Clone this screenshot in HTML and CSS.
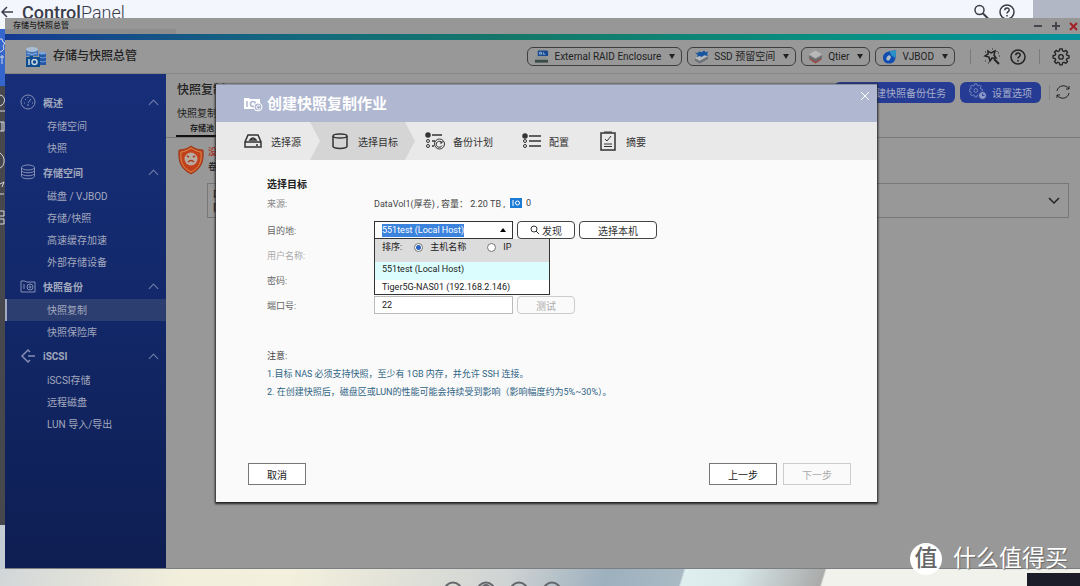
FILE: index.html
```html
<!DOCTYPE html>
<html lang="zh-CN">
<head>
<meta charset="utf-8">
<title>存储与快照总管</title>
<link rel="stylesheet" href="styles.css">
</head>
<body>
<div class="desktop">
  <header class="panel">
    <div class="panel-main">
      <svg class="back" viewBox="0 0 14 14"><path d="M13 7H2M7 2 2 7l5 5"/></svg>
      <span class="panel-title"><b>Control</b>Panel</span>
      <svg class="panel-icon" viewBox="0 0 18 18"><circle cx="7.500" cy="7" r="4.500"/><path d="m11 10.500 5 5" stroke-width="2"/></svg>
      <svg class="panel-icon" viewBox="0 0 18 18"><circle cx="9" cy="9" r="7"/><path d="M6.800 7.300C6.800 4.300 11.300 4.400 11.200 7c0 1.700-2.200 1.600-2.200 3.500M9 12v1.400"/></svg>
    </div>
  </header>
  <div class="rail">
    <div class="rail-on"><svg viewBox="0 0 5 40"><path d="M0 10h2l1 3 2 1-2 3 1 3-2 2-2 1M0 28h4M2 26v9"/></svg></div>
    <svg class="rail-rest" viewBox="0 0 5 150"><path d="M0 9c6 1 6 9 0 11M0 25h5M0 36h4v9H0M2 36v9M0 67c6 4 5 13 0 15M0 98l4-2-2 5M0 108h4M0 125h4v5H0M0 133h4v5H0"/></svg>
  </div>
  <footer class="dock">
    <svg viewBox="0 0 20 20"><circle cx="10" cy="10" r="8.500"/></svg>
    <svg viewBox="0 0 20 20"><circle cx="10" cy="10" r="8.500"/><circle cx="10" cy="8" r="4"/></svg>
    <svg viewBox="0 0 20 20"><circle cx="10" cy="10" r="8.500"/></svg>
    <svg viewBox="0 0 20 20"><circle cx="10" cy="10" r="8.500"/></svg>
  </footer>

  <main class="window">
    <div class="titlebar">
      <span class="titlebar-name">存储与快照总管</span>
      <svg class="win-controls" viewBox="0 0 46 12"><path d="M2 6h8M20 6h8M24 2v8" stroke="#44464b"/><path d="m38 3 7 7m0-7-7 7" stroke="#a52026"/></svg>
    </div>
    <div class="stripe"></div>
    <div class="appbar">
      <svg class="app-logo" viewBox="0 0 22 22"><path d="M1 3v7h12V3z" fill="#3f73bd"/><ellipse cx="7" cy="3.500" rx="6" ry="2.500" fill="#a9bdd5"/><path d="M2 7q5 3 10 0" stroke="#8fb2de" fill="none"/><path d="M14 7v12h7V7z" fill="#2457a8"/><ellipse cx="17.500" cy="7" rx="3.500" ry="1.500" fill="#7fa5d8"/><path d="M14 11q4 2 7 0M14 15q4 2 7 0" stroke="#7399cd" fill="none"/><path d="M1 11h3l1-1h3v1h7v10H1z" fill="#0c4c91"/><path d="M4 13v6" stroke="#c9d4df" stroke-width="1.500"/><circle cx="9.500" cy="16" r="2.500" fill="none" stroke="#c9d4df" stroke-width="1.500"/></svg>
      <h1 class="app-title">存储与快照总管</h1>
      <button class="pill" type="button"><svg viewBox="0 0 16 14"><path d="M3 6h10l2 4H1z" fill="#8d9492"/><path d="M1 10h14v3H1z" fill="#394b48"/><path d="M4 0h10l1 1v5H4z" fill="#174b91"/><path d="M6 2v2h2V2zM10 2v2h2" stroke="#9cb4d1" fill="none"/></svg>External RAID Enclosure<i class="caret"></i></button>
      <button class="pill" type="button"><svg viewBox="0 0 16 14"><path d="m1 8 5 3 9-5v3l-9 5-5-3z" fill="#6d7075"/><path d="m1 8 8-4 6 2-9 5z" fill="#b4b8bc"/><path d="m1 2 3 1 1-2 3 1 3-2 1 2 3-1-1 3 1 2-4-1-3 2-2-1-3 1 1-2z" fill="#1655a0"/></svg>SSD 预留空间<i class="caret"></i></button>
      <button class="pill" type="button"><svg viewBox="0 0 16 14"><path d="m1 8 7 3 7-3-1 2-6 4-6-4z" fill="#a0433d"/><path d="m1 5 7 4 7-4v3l-7 4-7-4z" fill="#696b6e"/><path d="m1 4 7-4 7 4-7 4z" fill="#b6b8b9"/></svg>Qtier<i class="caret"></i></button>
      <button class="pill" type="button"><svg viewBox="0 0 16 14"><path d="M15 0c0 9-1 14-8 14a6 6 0 0 1-6-6c0-5 4-8 14-8z" fill="#114db0"/><path d="M15 0c0 3 0 5-1 8l-4-3-2-4c2-1 4-1 7-1z" fill="#2c92c6"/><ellipse cx="7" cy="8" rx="2" ry="3" transform="rotate(30 7 8)" fill="#aebccc"/></svg>VJBOD<i class="caret"></i></button>
      <span class="rule"></span>
      <button class="tool wand" type="button" aria-label="Wizard"><svg viewBox="0 0 18 18"><path d="m5 3 3 2 4-2-1 4 2 3-4 0-2 3-1-4-4-1 3-2z"/><path d="m11 11 5 5" stroke-width="2"/><path d="M14 3v1M16 8h1M2 13h1M9 1h1M15 5h1M5 15h1M2 4h1" stroke-width="1"/></svg></button>
      <button class="tool" type="button" aria-label="Help"><svg viewBox="0 0 18 18"><circle cx="9" cy="9" r="7"/><path d="M6.800 7.300C6.800 4.300 11.300 4.400 11.200 7c0 1.700-2.200 1.600-2.200 3.500M9 12v1.400"/></svg></button>
      <span class="rule"></span>
      <button class="tool" type="button" aria-label="Settings"><svg viewBox="-1 0 20 20"><path d="M7.700 1h2.600l.5 2.200 1.500.7 2-1.200 1.900 1.900-1.200 2 .6 1.400 2.300.6v2.600l-2.300.5-.6 1.500 1.200 2-1.900 1.800-2-1.200-1.500.7-.5 2.300H7.700l-.5-2.300-1.500-.7-2 1.200L1.800 15.200l1.300-2-.7-1.500L.2 11.200V8.600L2.400 8l.7-1.400-1.300-2 1.900-1.900 2 1.200 1.500-.7z"/><circle cx="9" cy="9.900" r="2.500"/></svg></button>
    </div>

    <div class="workspace">
      <nav class="side">
        <div class="side-head"><svg viewBox="0 0 16 16"><circle cx="8" cy="8" r="7"/><path d="M4 9h1M5 5l1 1M8 3v1M11 5l-3 4M12 9h1M7 11h2"/></svg>概述<i class="up"></i></div>
        <a href="#storage">存储空间</a>
        <a href="#snap">快照</a>
        <div class="side-head"><svg viewBox="0 0 16 16"><ellipse cx="8" cy="3.500" rx="6.500" ry="2.500"/><path d="M1.500 3.500v9c1 3 12 3 13 0v-9M1.500 6.500c1 3 12 3 13 0M1.500 9.500c1 3 12 3 13 0"/></svg>存储空间<i class="up"></i></div>
        <a href="#disks">磁盘 / VJBOD</a>
        <a href="#pools">存储/快照</a>
        <a href="#cache">高速缓存加速</a>
        <a href="#external">外部存储设备</a>
        <div class="side-head"><svg viewBox="0 0 16 16"><path d="M1 3h4l1 1h9v10H1zM4 6v5"/><circle cx="10" cy="9" r="3"/><circle cx="10" cy="9" r="1"/></svg>快照备份<i class="up"></i></div>
        <a href="#replica" class="on">快照复制</a>
        <a href="#vault">快照保险库</a>
        <div class="side-head"><svg viewBox="0 0 16 16"><path d="M10 4 8 2 2 8l6 6 2-2M8 8h7" stroke-width="1.500"/></svg>iSCSI<i class="up"></i></div>
        <a href="#iscsi">iSCSI存储</a>
        <a href="#remote">远程磁盘</a>
        <a href="#lun">LUN 导入/导出</a>
      </nav>

      <section class="page">
        <div class="page-top">
          <h2>快照复制</h2>
          <button class="action" type="button">创建快照备份任务</button>
          <button class="action" type="button"><svg viewBox="0 0 20 18"><g transform="scale(.75)"><path d="M7.700 1h2.600l.5 2.200 1.500.7 2-1.200 1.900 1.900-1.200 2 .6 1.400 2.300.6v2.600l-2.300.5-.6 1.500 1.200 2-1.900 1.800-2-1.200-1.500.7-.5 2.300H7.700l-.5-2.300-1.500-.7-2 1.200L1.800 15.200l1.300-2-.7-1.500L.2 11.200V8.600L2.400 8l.7-1.400-1.300-2 1.900-1.900 2 1.200 1.500-.7z"/><circle cx="9" cy="9.900" r="2.500"/></g><circle cx="13.500" cy="12.500" r="4" fill="#8f9ac8" stroke="#263c94"/><path d="M13.500 10.500v2h2" stroke="#263c94"/></svg>设置选项</button>
          <span class="rule"></span>
          <button class="tool" type="button" aria-label="Refresh"><svg viewBox="0 0 18 18"><path d="M3 8c1-6 9-7 12-2V3M15 6h-3M15 10c-1 6-9 7-12 2v3M3 12h3" stroke-width="1"/></svg></button>
        </div>
        <p class="page-note">快照复制可</p>
        <div class="tabs"><span class="tab">存储池</span></div>
        <div class="alert">
          <svg viewBox="0 0 28 30"><path d="M14 1c4 3 8 4 12 4 1 12-2 19-12 24C4 24 1 17 2 5c4 0 8-1 12-4z" fill="#c2411a" stroke="#9a3a1e"/><path d="M14 3c3 2 7 4 10 4 1 10-2 16-10 20C6 23 3 17 4 7c3 0 7-2 10-4z" fill="none" stroke="#d68a4d"/><circle cx="14" cy="14" r="6.500" fill="#b9aaa2"/><path d="m10 11 2 1m6-1-2 1M11 17q3-3 6 0" stroke="#a23a1c" fill="none" stroke-width="1.500"/></svg>
          <div><b class="bad">没有</b><b>卷</b></div>
        </div>
        <div class="pool"><b>口<br>阝</b><svg viewBox="0 0 12 12"><path d="m1 3 5 5 5-5"/></svg></div>
      </section>
    </div>
  </main>

  <section class="dialog" role="dialog" aria-labelledby="dlg-title">
    <header class="dialog-head">
      <svg viewBox="0 0 20 16"><path d="M1 2h5l1 1h10v5a4 4 0 0 0-6 5H1z" fill="#fff"/><path d="M4 5v6" stroke="#b0b7d0" stroke-width="1.500"/><circle cx="10" cy="8" r="2.500" fill="none" stroke="#b0b7d0" stroke-width="1.500"/><circle cx="15" cy="11" r="4" fill="#b0b7d0" stroke="#fff"/><path d="M17 10a2 2 0 1 0 0 2.500" fill="none" stroke="#fff"/></svg>
      <h2 id="dlg-title">创建快照复制作业</h2>
      <button class="close" type="button" aria-label="Close"><svg viewBox="0 0 10 10"><path d="m1 1 8 8m0-8-8 8"/></svg></button>
    </header>
    <ol class="steps">
      <li class="step-a"><svg viewBox="0 0 18 18"><path d="M4 3h10l3 7v5H1v-5zM1 10h16M12 13h2M6 8q3-4 6 0z"/></svg>选择源</li>
      <li class="step-b"><svg viewBox="0 0 18 18"><ellipse cx="9" cy="4" rx="7" ry="2"/><path d="M2 4v10.500c1 2.500 13 2.500 14 0V4"/></svg>选择目标</li>
      <li class="step-c"><svg viewBox="0 0 20 18"><circle cx="3" cy="3" r="2" fill="#333"/><path d="M7 3h10M7 9h3M7 14h2"/><circle cx="3" cy="9" r="1.500" stroke-width="1"/><circle cx="3" cy="14" r="1.500" stroke-width="1"/><circle cx="14.500" cy="12" r="5" stroke-width="1"/><path d="M17 11a3 3 0 1 0 0 2.500M17 9v2h-2" stroke-width="1"/></svg>备份计划</li>
      <li class="step-d"><svg viewBox="0 0 20 18"><circle cx="3" cy="4" r="2" fill="#333"/><path d="M7 4h12M7 9h12M7 14h12"/><circle cx="3" cy="9" r="1.500" stroke-width="1"/><circle cx="3" cy="14" r="1.500" stroke-width="1"/></svg>配置</li>
      <li class="step-e"><svg viewBox="0 0 18 20"><path d="M2 2h14v17H2z"/><path d="M5 1h8M5 13h8M5 15.500h8" stroke-width="1"/><path d="m6 8 2 2 4-5" stroke-width="1"/></svg>摘要</li>
    </ol>
    <form class="form">
      <h3>选择目标</h3>
      <div class="row source"><span class="label">来源:</span><span>DataVol1(厚卷) , 容量：&nbsp;2.20 TB ,</span><svg viewBox="0 0 12 10"><path d="M0 0h12v10H0z" fill="#1b7cd6"/><path d="M3 2v6" stroke="#fff"/><circle cx="7.500" cy="5" r="2" stroke="#fff" fill="none"/></svg><span>0</span></div>
      <div class="row"><label class="label" for="dest">目的地:</label>
        <div class="combo">
          <div class="combo-box"><input id="dest" type="text" value="551test (Local Host)"><i class="open"></i></div>
          <div class="menu">
            <div class="sort"><span>排序:</span><label><input type="radio" name="sort" checked>主机名称</label><label><input type="radio" name="sort">IP</label></div>
            <div class="option current">551test (Local Host)</div>
            <div class="option">Tiger5G-NAS01 (192.168.2.146)</div>
          </div>
        </div>
        <button class="small" type="button"><svg viewBox="0 0 10 10"><circle cx="4" cy="4" r="3"/><path d="m6 6 3 3"/></svg>发现</button>
        <button class="small wide" type="button">选择本机</button>
      </div>
      <div class="row"><label class="label faint" for="user">用户名称:</label><input class="field" id="user" type="text"></div>
      <div class="row"><label class="label" for="pass">密码:</label><input class="field" id="pass" type="password"></div>
      <div class="row"><label class="label" for="port">端口号:</label><input class="field" id="port" type="text" value="22"><button class="small" type="button" disabled>测试</button></div>
      <div class="notes"><p class="notes-title">注意:</p><p>1.目标 NAS 必须支持快照，至少有 1GB 内存，并允许 SSH 连接。</p><p>2. 在创建快照后，磁盘区或LUN的性能可能会持续受到影响（影响幅度约为5%~30%）。</p></div>
    </form>
    <footer class="dialog-foot">
      <button type="button" class="cancel">取消</button>
      <button type="button">上一步</button>
      <button type="button" disabled>下一步</button>
    </footer>
  </section>

  <div class="watermark"><span class="mark">值</span>什么值得买</div>
</div>
</body>
</html>
```

FILE: styles.css
```css
* { box-sizing: border-box; }
body, h1, h2, h3, p, ol { margin: 0; padding: 0; }
body { font-family: Roboto, "Noto Sans CJK SC", sans-serif; font-size: 10px; color: #222; }
button, input { font: inherit; color: inherit; margin: 0; }
button { padding: 0; border: 0; background: none; }
svg { display: block; flex: none; fill: none; }
.desktop { position: relative; height: 100vh; overflow: hidden; background: #c3cdd3; }

.panel { display: flex; height: 29px; padding-right: 47px; background: linear-gradient(90deg, #a9b2c4, #b2b7c6); }
.panel-main { flex: 1; display: flex; align-items: flex-start; gap: 8px; padding: 3px 17px 0 0; background: #f3f6fd; }
.back { width: 14px; height: 14px; margin-top: 2px; stroke: #3b3d4b; stroke-width: 1.5; }
.panel-title { flex: 1; font-size: 18px; line-height: 20px; font-weight: 300; color: #3b3d4b; }
.panel-title b { font-weight: 500; }
.panel-icon { width: 18px; height: 18px; stroke: #3a3c44; stroke-width: 1.5; }
.rail { position: absolute; left: 0; top: 29px; bottom: 61px; width: 5px; background: #47484e; }
.rail-on { height: 57px; background: #3566cd; }
.rail svg { width: 5px; stroke: #d5d9e2; }
.rail-on svg { height: 40px; }
.rail-rest { height: 150px; }
.dock { position: absolute; left: 0; right: 0; bottom: 0; height: 17px; display: flex; justify-content: center; gap: 13px; padding: 12px 76px 0 0; background: linear-gradient(107deg, transparent 76%, #f2f2ec 76.2%, #f2f2ec 92%), linear-gradient(107deg, #d2d6d8, #f2efdc 17%, #f3f0dd 27%, #cfd3d3 47%, #9db0be 56%, #a9bac4 63%, #dfeeee 63.2%, #d9e9ea 68%, #aaa 76%); }
.dock::after { content: ""; position: absolute; right: 0; bottom: 0; width: 53px; height: 13px; background: #1b1d29; }
.dock svg { width: 20px; height: 20px; stroke: #64676b; stroke-width: 2; }

.window { position: absolute; inset: 18px 0 17px 5px; display: flex; flex-direction: column; background: #989898; border-bottom: 1px solid #7b7f82; }
.titlebar { height: 16px; display: flex; align-items: center; justify-content: space-between; padding: 0 2px 0 8px; background: linear-gradient(#8d8d8d, #8d8d8d) 0 11px / 171px 5px no-repeat #979797; }
.titlebar-name { font-size: 8px; font-weight: 500; line-height: 12px; }
.win-controls { width: 46px; height: 12px; stroke-width: 2; }
.stripe { height: 6px; background: linear-gradient(90deg, #153a91, #14677f 25%, #147868 48%, #079184 80%, #06909b); }
.appbar { height: 34px; display: flex; align-items: center; gap: 5px; padding: 0 10px 0 20px; border-bottom: 1px solid #858585; }
.app-logo { width: 22px; height: 22px; }
.app-title { flex: 1; padding-left: 1px; font-size: 12px; line-height: 16px; margin-bottom: 2px; font-weight: 500; }
.pill { height: 19px; display: flex; align-items: center; gap: 5px; padding: 0 6px 0 6px; border: 1px solid #3e3e3e; border-radius: 6px; font-size: 10px; line-height: 17px; white-space: nowrap; }
.pill svg { width: 15px; height: 14px; }
.caret { margin-left: 3px; border: 3px solid transparent; border-top: 5px solid #222; border-bottom: 0; }
.rule { width: 1px; height: 15px; margin: 0 7px; background: #7b7b7b; }
.appbar .rule:nth-of-type(1) { margin-left: 10px; }
.tool { width: 18px; height: 18px; }
.tool svg { width: 18px; height: 18px; stroke: #222; stroke-width: 1.5; }
.wand { margin-right: 3px; }

.workspace { flex: 1; min-height: 0; display: flex; }
.side { width: 161px; flex: none; padding-top: 15px; background: linear-gradient(#172e79, #13296c 40%, #0e1e52); color: #a2a8bd; }
.side-head { height: 26px; display: flex; align-items: center; gap: 7px; padding: 0 9px 0 15px; font-weight: 700; }
.side-head svg { width: 16px; height: 16px; stroke: #858fb4; }
.up { width: 7px; height: 7px; margin: 4px 0 0 auto; border: solid #7480aa; border-width: 1px 0 0 1px; transform: rotate(45deg); }
.side a { display: block; height: 22px; padding-left: 42px; line-height: 24px; color: inherit; text-decoration: none; }
.side .on { padding-left: 40px; border-left: 2px solid #a2a8bd; background: #2c3e70; }

.page { flex: 1; min-width: 0; padding: 7px 10px 0 11px; }
.page-top { display: flex; align-items: center; gap: 5px; height: 22px; }
.page-top h2 { flex: 1; align-self: flex-start; font-size: 12px; line-height: 18px; font-weight: 500; }
.action { height: 21px; display: flex; align-items: center; gap: 3px; padding: 0 9px; border-radius: 6px; background: #263c94; color: #a7aecb; font-size: 10px; }
.action:first-of-type { padding-left: 32px; }
.action svg { width: 20px; height: 18px; stroke: #8f9ac8; }
.page-top .rule { margin: 0 0 0 3px; background: #858585; }
.page-top .tool { margin: 0 -2px 0 -1px; }
.page-note { padding: 3px 0 1px; line-height: 16px; }
.tabs { margin: 0 -10px 0 -11px; padding: 0 10px; border-bottom: 1px solid #7c7c7c; }
.tab { display: inline-block; padding: 0 14px; border-bottom: 2px solid #111; font-size: 8px; line-height: 12px; font-weight: 700; vertical-align: top; }
.alert { display: flex; gap: 3px; padding-top: 7px; font-size: 9px; line-height: 15px; }
.alert svg { width: 28px; height: 30px; }
.alert b { display: block; font-weight: 500; }
.alert .bad { color: #a82a1a; }
.pool { height: 35px; display: flex; align-items: center; justify-content: space-between; margin: 8px 1px 0 30px; padding: 0 8px 0 5px; border: 1px solid #777; font-size: 9px; line-height: 14px; }
.pool svg { width: 12px; height: 12px; stroke: #222; stroke-width: 1.5; }

.dialog { position: absolute; inset: 84px 203px 84px 216px; display: flex; flex-direction: column; border-top: 1px solid #8b90a1; background: #fafafa; box-shadow: 0 1px 2px 1px #222; }
.dialog-head { height: 37px; display: flex; align-items: center; gap: 4px; padding: 0 7px 0 27px; background: #b0b7d0; color: #fff; }
.dialog-head > svg { width: 20px; height: 16px; }
.dialog-head h2 { flex: 1; font-size: 15px; font-weight: 700; line-height: 18px; }
.close { align-self: flex-start; margin-top: 6px; }
.close svg { width: 10px; height: 10px; stroke: #fff; }
.steps { height: 38px; display: flex; list-style: none; background: #e9e9e9; color: #333; }
.steps li { display: flex; align-items: center; gap: 9px; white-space: nowrap; }
.steps svg { width: 18px; height: 18px; stroke: #333; stroke-width: 1.5; }
.steps .step-c svg, .steps .step-d svg { width: 20px; }
.steps .step-e svg { height: 20px; }
.step-a { width: 94px; padding-left: 28px; }
.step-b { width: 105px; padding-left: 21px; background: #d5d5d5; clip-path: polygon(0 0, 95px 0, 100% 50%, 95px 100%, 0 100%, 10px 50%); }
.steps .step-c { gap: 8px; padding-left: 10px; margin-right: 29px; }
.steps .step-d { gap: 7px; margin-right: 30px; }

.form { padding: 16px 51px 0; font-size: 9px; }
.form h3 { font-size: 10px; line-height: 18px; font-weight: 700; }
.row { display: flex; align-items: center; gap: 4px; height: 18px; margin-bottom: 7px; }
.row:nth-last-of-type(2) { margin-bottom: 6px; }
.source { margin-bottom: 9px; color: #444; white-space: nowrap; }
.source svg { width: 12px; height: 10px; margin-left: 1px; }
.label { width: 103px; color: #666; }
.source .label { color: #888; }
.faint { color: #aaa; }
.combo { position: relative; width: 139px; }
.combo-box { height: 18px; display: flex; align-items: center; justify-content: space-between; padding: 0 6px 0 7px; border: 1px solid #333; background: #fff; }
.combo-box input { field-sizing: content; height: 13px; padding: 0; border: 0; outline: 0; background: #3b83dd; color: #fff; }
.open { border: 3px solid transparent; border-bottom: 4px solid #000; border-top: 0; }
.menu { position: absolute; left: 0; top: 18px; z-index: 2; width: 176px; border: 1px solid #333; border-top: 0; background: #fff; color: #222; }
.sort { height: 23px; display: flex; align-items: flex-start; gap: 7px; padding: 2px 7px 0; background: #dcdcdc; line-height: 13px; white-space: nowrap; }
.sort label { display: flex; align-items: center; gap: 7px; margin-right: 14px; }
.sort label:first-of-type { margin-left: 5px; }
.sort input { appearance: none; width: 9px; height: 9px; border: 1px solid #777; border-radius: 50%; background: #fff; }
.sort input:checked { background: radial-gradient(#2d62c0 0 2px, #fff 3px); }
.option { height: 14px; padding-left: 7px; line-height: 14px; white-space: nowrap; }
.current { height: 18px; line-height: 15px; background: #dcfdfd; }
.field { width: 139px; height: 18px; padding: 0 7px; border: 1px solid #bbb; background: #fff; }
.small { width: 58px; height: 18px; display: flex; align-items: center; justify-content: center; gap: 2px; border: 1px solid #444; border-radius: 4px; background: #fff; font-size: 10px; color: #333; }
.small svg { width: 10px; height: 10px; stroke: #333; }
.wide { width: 78px; }
.small:disabled { border-color: #ccc; color: #aaa; background: #fafafa; }
.notes { padding-top: 27px; line-height: 18px; color: #2f6484; white-space: nowrap; }
.notes-title { color: #444; }
.dialog-foot { display: flex; gap: 6px; margin-top: auto; padding: 0 26px 17px 32px; }
.dialog-foot button { width: 68px; height: 22px; border: 1px solid #777; background: #fff; font-size: 10px; }
.dialog-foot .cancel { width: 58px; margin-right: auto; }
.dialog-foot button:disabled { border-color: #ccc; color: #aaa; background: #fafafa; }

.watermark { position: absolute; right: 12px; bottom: 11px; display: flex; align-items: center; gap: 11px; font-size: 23px; line-height: 32px; color: #fff; text-shadow: 1px 1px 1px #666; }
.mark { width: 32px; height: 32px; border-radius: 50%; background: #fff; color: #666; text-align: center; font-weight: 500; text-shadow: none; }
```
